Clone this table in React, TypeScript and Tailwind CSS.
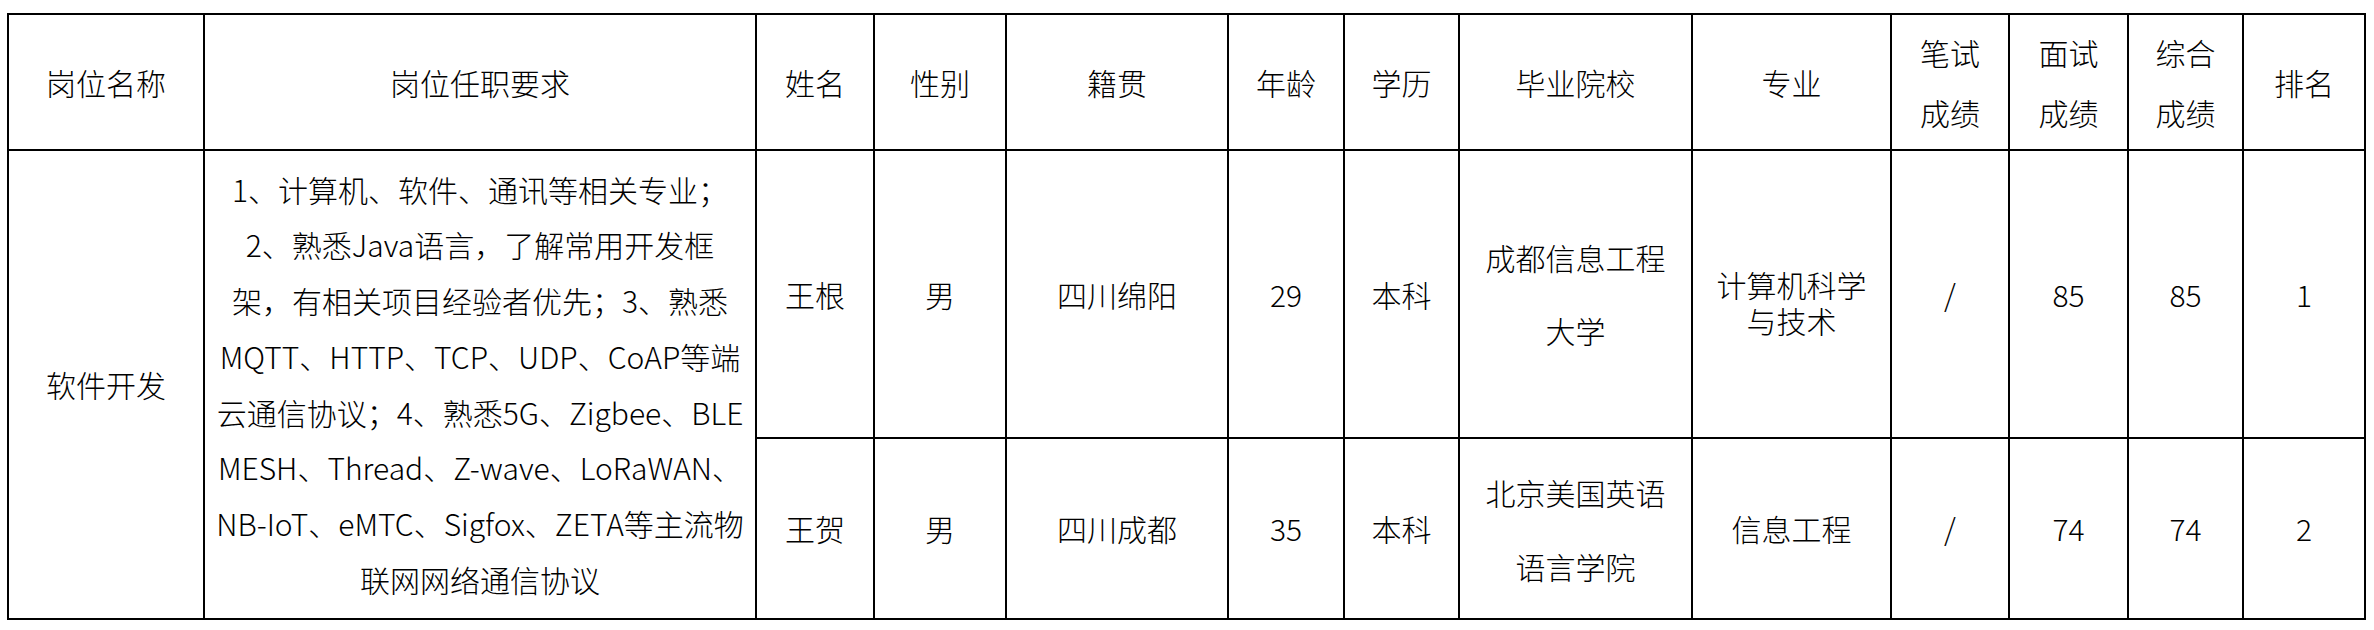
import React from 'react';

const requirementLines = [
  '1、计算机、软件、通讯等相关专业；',
  '2、熟悉Java语言，了解常用开发框',
  '架，有相关项目经验者优先；3、熟悉',
  'MQTT、HTTP、TCP、UDP、CoAP等端',
  '云通信协议；4、熟悉5G、Zigbee、BLE',
  'MESH、Thread、Z-wave、LoRaWAN、',
  'NB-IoT、eMTC、Sigfox、ZETA等主流物',
  '联网网络通信协议',
];

const cell = 'border-2 border-black p-0 text-center align-middle font-light whitespace-nowrap';

const App: React.FC = () => {
  return (
    <div className="min-h-[630px] w-[2374px] bg-white pl-[7px] pt-[13px] text-[30px] text-black font-['Liberation_Sans_Narrow','Noto_Sans_CJK_SC',sans-serif]">
      <table className="w-[2357px] table-fixed border-collapse">
        <colgroup>
          <col className="w-[196px]" />
          <col className="w-[552px]" />
          <col className="w-[118px]" />
          <col className="w-[132px]" />
          <col className="w-[222px]" />
          <col className="w-[116px]" />
          <col className="w-[115px]" />
          <col className="w-[233px]" />
          <col className="w-[199px]" />
          <col className="w-[118px]" />
          <col className="w-[119px]" />
          <col className="w-[115px]" />
          <col className="w-[122px]" />
        </colgroup>
        <thead>
          <tr className="h-[136px]">
            <th className={cell}>岗位名称</th>
            <th className={cell}>岗位任职要求</th>
            <th className={cell}>姓名</th>
            <th className={cell}>性别</th>
            <th className={cell}>籍贯</th>
            <th className={cell}>年龄</th>
            <th className={cell}>学历</th>
            <th className={cell}>毕业院校</th>
            <th className={cell}>专业</th>
            <th className={`${cell} leading-[60px]`}>
              <div>笔试</div>
              <div>成绩</div>
            </th>
            <th className={`${cell} leading-[60px]`}>
              <div>面试</div>
              <div>成绩</div>
            </th>
            <th className={`${cell} leading-[60px]`}>
              <div>综合</div>
              <div>成绩</div>
            </th>
            <th className={cell}>排名</th>
          </tr>
        </thead>
        <tbody>
          <tr className="h-[288px]">
            <td rowSpan={2} className={cell}>软件开发</td>
            <td rowSpan={2} className={`${cell} leading-[55.7px]`}>
              {requirementLines.map((line) => (
                <div key={line}>{line}</div>
              ))}
            </td>
            <td className={cell}>王根</td>
            <td className={cell}>男</td>
            <td className={cell}>四川绵阳</td>
            <td className={cell}>29</td>
            <td className={cell}>本科</td>
            <td className={`${cell} leading-[73px]`}>
              <div>成都信息工程</div>
              <div>大学</div>
            </td>
            <td className={`${cell} leading-[36px] pt-4`}>
              <div>计算机科学</div>
              <div>与技术</div>
            </td>
            <td className={cell}>/</td>
            <td className={cell}>85</td>
            <td className={cell}>85</td>
            <td className={cell}>1</td>
          </tr>
          <tr className="h-[181px]">
            <td className={cell}>王贺</td>
            <td className={cell}>男</td>
            <td className={cell}>四川成都</td>
            <td className={cell}>35</td>
            <td className={cell}>本科</td>
            <td className={`${cell} leading-[74px]`}>
              <div>北京美国英语</div>
              <div>语言学院</div>
            </td>
            <td className={cell}>信息工程</td>
            <td className={cell}>/</td>
            <td className={cell}>74</td>
            <td className={cell}>74</td>
            <td className={cell}>2</td>
          </tr>
        </tbody>
      </table>
    </div>
  );
};

export default App;
